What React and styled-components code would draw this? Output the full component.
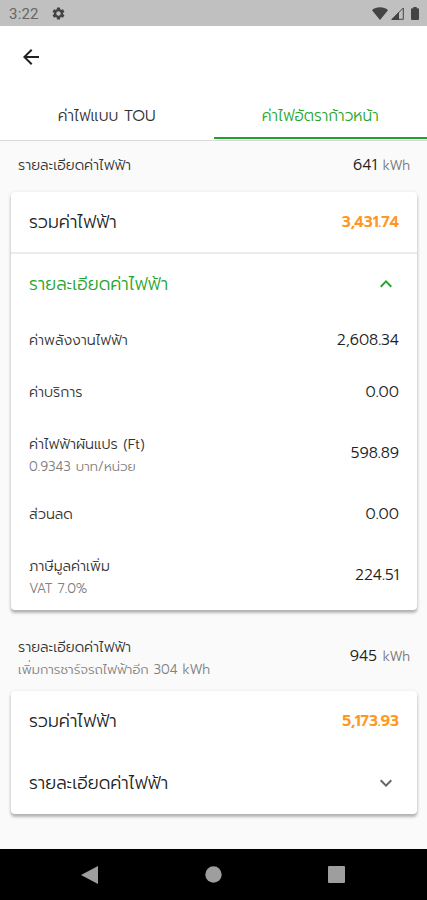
import React from "react";
import styled, { createGlobalStyle } from "styled-components";
import { MdArrowBack, MdSettings, MdKeyboardArrowDown, MdKeyboardArrowUp } from "react-icons/md";

const GlobalStyle = createGlobalStyle`
  * {
    box-sizing: border-box;
  }

  body {
    margin: 0;
    background: #fafafa;
    font-family: Prompt, Inter, "Noto Sans Thai", "Noto Sans", sans-serif;
    font-weight: 300;
    color: #222;
  }
`;

const Screen = styled.div`
  display: flex;
  flex-direction: column;
  height: 900px;
  overflow: hidden;
`;

const StatusBar = styled.div`
  display: flex;
  align-items: center;
  justify-content: space-between;
  flex: none;
  height: 26px;
  padding: 1px 8px 0 9px;
  background: #c0c0c0;
  color: #444;
`;

const StatusGroup = styled.div`
  display: flex;
  align-items: center;
  gap: ${props => props.$gap}px;
`;

const Clock = styled.span`
  font-family: Roboto, sans-serif;
  font-size: 15px;
  font-weight: 400;
  letter-spacing: 0.2px;
  color: #666;
`;

const AppBar = styled.div`
  display: flex;
  align-items: center;
  flex: none;
  height: 63px;
  padding: 0 0 2px 19px;
  background: #fff;
`;

const Tabs = styled.div`
  display: flex;
  flex: none;
  height: 52px;
  background: #fff;
  border-bottom: 1px solid #d8d8d8;
`;

const Tab = styled.div`
  display: flex;
  align-items: center;
  justify-content: center;
  flex: 1;
  height: 50px;
  padding-top: 4px;
  font-size: 15.4px;
  color: ${props => (props.$active ? "#26a52c" : "#333")};
  border-bottom: 2px solid ${props => (props.$active ? "#1fa32a" : "transparent")};
`;

const Content = styled.div`
  flex: 1;
  padding: 0 10px 0 11px;
`;

const Summary = styled.div`
  display: flex;
  align-items: center;
  justify-content: space-between;
  height: ${props => (props.$tall ? 81 : 51)}px;
  padding: ${props => (props.$tall ? "10px 7px 0" : "0 7px 4px")};
`;

const Card = styled.div`
  background: #fff;
  border-radius: 4px;
  box-shadow: 0 3px 3px rgba(0, 0, 0, 0.24), 0 1px 4px rgba(0, 0, 0, 0.12);
`;

const Row = styled.div`
  display: flex;
  align-items: center;
  justify-content: space-between;
  height: ${props => props.$height}px;
  padding: 0 18px;
  border-bottom: ${props => (props.$divider ? "2px solid #ececec" : "none")};
`;

const CostRow = styled(Row)`
  padding-bottom: 2px;
`;

const Labels = styled.div`
  display: flex;
  flex-direction: column;
  padding-top: ${props => (props.$double ? 6 : 1)}px;
`;

const Text = styled.span`
  font-size: 14.25px;
  line-height: 22px;
  color: #333;
  white-space: nowrap;
`;

const Note = styled(Text)`
  margin-top: 1px;
  font-size: 13.15px;
  color: #808080;
`;

const Heading = styled(Text)`
  font-size: 17.55px;
  color: ${props => (props.$open ? "#26a52c" : "#222")};
`;

const Amount = styled.span`
  font-size: 15.4px;
  color: #222;
`;

const Total = styled(Amount)`
  padding-bottom: 1px;
  font-weight: 600;
  color: #ff9822;
`;

const Unit = styled.span`
  font-size: 13.1px;
  color: #777;
`;

const Toggle = styled.div`
  display: flex;
  margin-right: 1px;
  color: ${props => (props.$open ? "#26a52c" : "#666")};
`;

const NavBar = styled.div`
  display: flex;
  align-items: center;
  justify-content: space-between;
  flex: none;
  height: 51px;
  padding: 0 82px 0 81px;
  background: #000;
`;

const costs = [
  { label: "ค่าพลังงานไฟฟ้า", value: "2,608.34" },
  { label: "ค่าบริการ", value: "0.00" },
  { label: "ค่าไฟฟ้าผันแปร (Ft)", note: "0.9343 บาท/หน่วย", value: "598.89" },
  { label: "ส่วนลด", value: "0.00" },
  { label: "ภาษีมูลค่าเพิ่ม", note: "VAT 7.0%", value: "224.51" }
];

const WifiIcon = () => (
  <svg width="16" height="13" viewBox="0 0 16 13">
    <path d="M0 3.2C2.2 1.2 4.9.3 8 .3s5.8.9 8 2.9L8 13z" fill="currentColor" />
  </svg>
);

const SignalIcon = () => (
  <svg width="13" height="13" viewBox="0 0 13 13">
    <path d="M12.3 1v11.3H1z" fill="none" stroke="currentColor" strokeWidth="1" />
    <path d="M8 5v8H0z" fill="currentColor" />
  </svg>
);

const BatteryIcon = () => (
  <svg width="8" height="13" viewBox="0 0 8 13">
    <path d="M2.3 0h3.4v1.3H7a1 1 0 0 1 1 1V12a1 1 0 0 1-1 1H1a1 1 0 0 1-1-1V2.3a1 1 0 0 1 1-1h1.3z" fill="currentColor" />
  </svg>
);

const UsageSummary = ({ note, value }) => (
  <Summary $tall={!!note}>
    <Labels $double={!!note}>
      <Text>รายละเอียดค่าไฟฟ้า</Text>
      {note && <Note>{note}</Note>}
    </Labels>
    <Amount>{value} <Unit>kWh</Unit></Amount>
  </Summary>
);

const BillCard = ({ total, items }) => (
  <Card>
    <Row $height={items ? 62 : 60} $divider={!!items}>
      <Heading>รวมค่าไฟฟ้า</Heading>
      <Total>{total}</Total>
    </Row>
    <Row $height={items ? 60 : 63}>
      <Heading $open={!!items}>รายละเอียดค่าไฟฟ้า</Heading>
      <Toggle $open={!!items}>
        {items ? <MdKeyboardArrowUp size={24} /> : <MdKeyboardArrowDown size={24} />}
      </Toggle>
    </Row>
    {items && items.map(item => (
      <CostRow key={item.label} $height={item.note ? 70 : 52}>
        <Labels $double={!!item.note}>
          <Text>{item.label}</Text>
          {item.note && <Note>{item.note}</Note>}
        </Labels>
        <Amount>{item.value}</Amount>
      </CostRow>
    ))}
  </Card>
);

export default function App() {
  return (
    <Screen>
      <GlobalStyle />
      <StatusBar>
        <StatusGroup $gap={12}>
          <Clock>3:22</Clock>
          <MdSettings size={15} />
        </StatusGroup>
        <StatusGroup $gap={7}>
          <StatusGroup $gap={3}>
            <WifiIcon />
            <SignalIcon />
          </StatusGroup>
          <BatteryIcon />
        </StatusGroup>
      </StatusBar>
      <AppBar>
        <MdArrowBack size={24} />
      </AppBar>
      <Tabs>
        <Tab>ค่าไฟแบบ TOU</Tab>
        <Tab $active>ค่าไฟอัตราก้าวหน้า</Tab>
      </Tabs>
      <Content>
        <UsageSummary value="641" />
        <BillCard total="3,431.74" items={costs} />
        <UsageSummary note="เพิ่มการชาร์จรถไฟฟ้าอีก 304 kWh" value="945" />
        <BillCard total="5,173.93" />
      </Content>
      <NavBar>
        <svg width="17" height="18" viewBox="0 0 17 18">
          <path d="M0 9L17 0v18z" fill="#9e9e9e" />
        </svg>
        <svg width="17" height="17" viewBox="0 0 17 17">
          <circle cx="8.5" cy="8.5" r="8.2" fill="#9e9e9e" />
        </svg>
        <svg width="17" height="17" viewBox="0 0 17 17">
          <rect width="17" height="17" rx="1" fill="#9e9e9e" />
        </svg>
      </NavBar>
    </Screen>
  );
}
